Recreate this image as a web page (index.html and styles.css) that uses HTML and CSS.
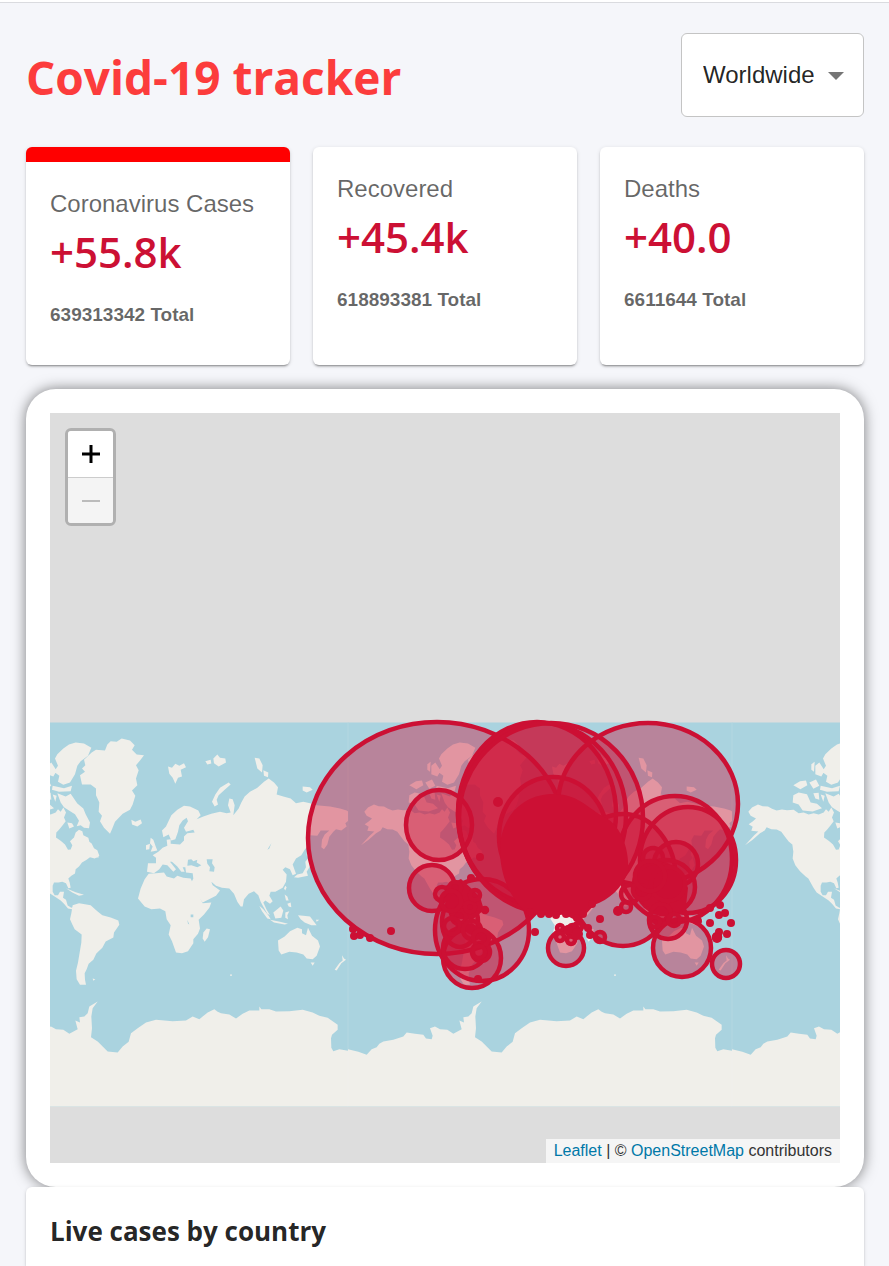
FILE: index.html
```html
<!DOCTYPE html>
<html lang="en">
<head>
<meta charset="utf-8">
<meta name="viewport" content="width=device-width, initial-scale=1">
<title>Covid-19 tracker</title>
<link rel="stylesheet" href="styles.css">
</head>
<body>
<div class="app">
  <header class="header">
    <h1 class="title">Covid-19 tracker</h1>
    <div class="picker">
      <select class="picker-select" aria-label="Country">
        <option>Worldwide</option>
      </select>
      <svg class="picker-arrow" viewBox="0 0 16 8" aria-hidden="true"><path d="M0 0h16l-8 8z"/></svg>
    </div>
  </header>

  <section class="stats">
    <article class="card stat stat-active">
      <p class="stat-label">Coronavirus Cases</p>
      <h2 class="stat-value">+55.8k</h2>
      <p class="stat-total">639313342 Total</p>
    </article>
    <article class="card stat">
      <p class="stat-label">Recovered</p>
      <h2 class="stat-value">+45.4k</h2>
      <p class="stat-total">618893381 Total</p>
    </article>
    <article class="card stat">
      <p class="stat-label">Deaths</p>
      <h2 class="stat-value">+40.0</h2>
      <p class="stat-total">6611644 Total</p>
    </article>
  </section>

  <section class="map-card">
    <div class="map">
      <svg class="map-canvas" viewBox="50 413 790 750" preserveAspectRatio="xMidYMid slice" role="img" aria-label="World map of cases">
        <defs>
          <g id="world">
            <rect class="water" width="1153" height="1152"/>
            <g class="land">
              <!-- North America -->
              <path d="M49 268L60 255 78 246 92 251 108 252 120 259 134 264 150 261 165 263 185 262 200 272 215 270 230 276 245 272 260 276 275 270 282 260 290 268 298 255 306 270 300 285 305 296 296 308 285 322 277 330 276 345 290 355 303 366 312 382 320 381 325 368 318 356 330 345 335 330 345 322 355 326 358 338 373 346 376 358 383 363 390 377 400 383 406 400 392 408 378 404 368 412 354 420 345 432 335 440 333 453 322 460 313 468 317 480 320 496 313 497 306 482 295 478 283 480 270 480 266 490 266 508 272 518 282 518 288 508 300 508 297 526 306 532 311 549 322 556 335 552 328 561 312 558 300 544 290 534 272 522 254 510 244 495 229 468 221 462 204 446 190 428 182 408 184 388 181 366 170 357 159 343 148 328 134 321 118 320 104 314 98 324 84 332 62 352 39 368 66 339 79 327 58 325 62 313 50 305 62 297 72 288 56 280Z"/>
              <!-- Canadian Arctic -->
              <path d="M273 108L280 95 298 78 315 66 335 60 360 63 382 76 372 100 350 116 340 130 333 155 318 180 298 187 282 178 286 160 270 148 282 130ZM280 212L305 222 320 214 340 243 358 258 365 275 378 300 375 317 360 316 350 308 338 311 345 295 333 275 315 264 300 254 290 240ZM184 218L200 210 225 215 236 240 255 244 270 257 242 267 212 264 200 246 182 240ZM184 188L204 176 222 174 226 188 205 200ZM232 180L252 171 262 190 244 199ZM266 190L300 197 324 190 320 206 285 208 264 202ZM278 145L268 162 250 155 250 130 262 120ZM244 212L260 211 262 232 250 228ZM266 216L278 220 274 238ZM310 300L324 302 330 312 316 318ZM238 125L248 118 246 148 238 142ZM390 394L403 398 404 405 392 405ZM306 497L335 509 360 517 345 520 325 510Z"/>
              <!-- South America -->
              <path d="M326 548L345 542 363 545 380 548 400 566 415 578 440 585 463 594 466 607 450 630 448 645 425 657 415 676 397 693 388 712 374 724 368 740 362 752 363 772 366 787 348 787 338 770 336 745 342 720 347 690 352 660 353 636 332 620 325 606 318 590 322 572Z"/>
            </g>
            <g class="land" transform="translate(258 -22)">
              <!-- Greenland, Iceland, Svalbard and Arctic islands -->
              <path d="M90 180L105 170 96 160 106 150 102 134 125 112 138 104 165 106 172 88 182 78 200 80 215 70 240 76 254 90 246 104 260 118 282 120 270 136 258 150 266 165 258 190 262 210 246 226 256 242 248 268 240 284 218 296 195 320 186 342 180 356 162 338 150 318 156 302 146 290 148 262 138 240 138 220 122 208 96 208ZM244 314L256 320 272 313 276 324 262 334 246 328ZM354 154L366 158 376 146 388 152 402 144 408 156 392 164 396 184 384 188 376 206 368 188 358 176ZM466 138L482 134 484 145 472 148ZM490 130L502 118 510 128 526 130 528 142 506 154 492 144ZM614 128L628 130 638 150 636 172 622 160ZM640 165L655 172 654 186 642 182ZM758 214L780 216 788 224 770 232 758 226ZM536 202L542 208 524 224 506 240 500 254 504 268 494 274 486 260 496 238 510 218Z"/>
              <!-- Eurasia -->
              <path d="M291 470L294 444 318 444 318 428 308 420 325 410 338 398 352 392 350 374 362 372 362 386 390 388 402 376 402 364 412 354 434 352 430 344 408 350 402 338 414 318 410 308 398 316 388 330 384 350 376 372 364 376 356 358 340 366 336 346 348 334 364 300 382 284 402 272 420 274 445 286 452 300 440 312 460 304 484 296 510 290 530 294 542 292 534 270 538 250 548 252 554 270 550 300 566 280 574 262 584 244 600 230 622 218 642 200 656 190 672 202 684 216 680 238 700 244 722 250 738 264 760 260 780 264 800 270 815 272 840 274 870 280 890 286 910 300 922 308 918 318 898 314 886 324 890 334 874 346 858 342 850 350 838 365 832 388 822 402 814 396 816 374 824 358 838 346 812 346 802 362 780 360 772 375 774 392 764 404 754 420 738 430 728 448 738 476 728 480 720 462 706 456 698 464 710 478 708 500 698 518 676 530 662 530 658 542 668 558 660 566 646 556 640 562 650 584 660 600 652 596 640 575 632 560 625 540 612 528 596 536 582 552 578 574 572 574 562 560 552 536 538 520 516 518 498 512 484 500 488 510 510 526 498 542 458 562 444 544 424 502 430 490 428 474 408 472 406 456 398 456 404 470 394 470 382 454 366 440 360 440 378 462 370 470 352 450 338 448 328 462 312 474Z"/>
              <!-- British Isles, Japan -->
              <path d="M302 368L310 374 318 396 322 406 302 410 308 394 300 384ZM288 390L300 386 298 402 288 404ZM776 428L782 450 770 470 774 482 744 488 732 486 742 478 758 474 768 456 766 440ZM772 396L778 398 778 430 770 420ZM706 512L710 516 706 526 702 520Z"/>
              <!-- Africa and Madagascar -->
              <path d="M296 476L318 474 342 472 350 484 372 490 382 482 400 488 422 490 432 512 446 540 458 564 484 562 478 578 462 598 446 614 450 640 444 656 430 672 430 684 414 708 396 714 378 712 366 678 356 658 362 630 350 612 346 588 330 580 304 582 284 574 264 550 272 520 284 492ZM470 640L480 642 474 666 464 680 458 670 460 652Z"/>
              <!-- Indonesia, Philippines, New Guinea -->
              <path d="M628 572L640 582 656 602 662 612 652 610 636 588ZM660 614L690 620 714 626 704 628 672 622ZM670 592L692 574 700 586 694 608 676 610ZM706 592L718 588 712 600 714 612 706 608ZM704 538L712 544 716 556 708 556ZM712 566L722 562 724 576 716 574ZM744 600L760 602 780 604 800 630 784 630 764 622 752 612Z"/>
              <!-- Australia and New Zealand -->
              <path d="M684 676L704 664 720 648 742 638 756 642 756 654 768 660 774 638 786 662 804 676 810 694 800 722 788 732 770 730 760 718 740 712 718 710 694 718 686 706ZM782 742L794 742 788 752ZM876 720L882 730 888 734 874 744 860 766 854 764 868 744 878 736Z"/>
              <path d="M798 614h10l-8 6zM540 778h6v4h-6zM128 790l8 2-6 5z"/>
            </g>
            <!-- Inland seas -->
            <g class="water" transform="translate(258 -22)">
              <path d="M414 434L424 432 430 438 442 434 440 442 454 450 442 456 424 450 412 452ZM470 432L488 432 486 444 494 456 492 470 478 468 480 456 472 446ZM422 598h8v8h-8zM412 614l6 14-4-2zM664 384l-6 16-6 4z"/>
            </g>
            <!-- Antarctica -->
            <path class="land" transform="translate(-24 772)" d="M24 208L55 216 80 225 95 208 110 202 118 192 130 185 160 180 190 170 200 158 225 162 250 165 258 176 275 178 278 168 270 145 285 140 300 148 322 150 340 162 365 148 358 122 372 128 370 112 385 110 395 100 400 80 425 65 410 85 406 110 408 145 405 172 425 185 440 200 455 215 485 218 500 200 518 186 525 160 545 145 570 128 600 120 650 124 690 122 710 110 730 118 755 98 775 88 785 96 795 100 820 104 840 116 860 102 880 92 910 92 910 80 916 88 940 88 960 95 1000 94 1040 90 1070 98 1090 108 1115 114 1145 135 1145 150 1128 165 1125 175 1126 204 1132 214 1150 208 1176 213V380H24Z"/>
          </g>
        </defs>

        <use href="#world" transform="translate(-36 722.5) scale(.33333)"/>
        <use href="#world" transform="translate(348 722.5) scale(.33333)"/>
        <use href="#world" transform="translate(732 722.5) scale(.33333)"/>
        <path class="seam" d="M348 723v384M732 723v384"/>

        <g class="bubbles">
          <ellipse cx="437" cy="838" rx="129" ry="116"/>
          <ellipse cx="439" cy="825" rx="33" ry="35"/>
          <circle cx="432" cy="888" r="23"/>
          <ellipse cx="482" cy="930" rx="47" ry="51"/>
          <ellipse cx="472" cy="958" rx="29" ry="30"/>
          <ellipse cx="465" cy="948" rx="22" ry="21"/>
          <ellipse cx="460" cy="922" rx="18" ry="25"/>
          <circle cx="481" cy="952" r="9"/>
          <ellipse cx="537" cy="813" rx="79" ry="91"/>
          <ellipse cx="542" cy="815" rx="84" ry="92"/>
          <ellipse cx="551" cy="818" rx="92" ry="95"/>
          <ellipse cx="553" cy="836" rx="54" ry="59"/>
          <ellipse cx="648" cy="804" rx="90" ry="81"/>
          <ellipse cx="675" cy="859" rx="57" ry="63"/>
          <ellipse cx="688" cy="860" rx="48" ry="53"/>
          <ellipse cx="623" cy="880" rx="53" ry="66"/>
          <circle cx="653" cy="858" r="10"/>
          <circle cx="676" cy="864" r="22"/>
          <ellipse cx="666" cy="887" rx="29" ry="27"/>
          <circle cx="655" cy="884" r="21"/>
          <circle cx="668" cy="920" r="19"/>
          <circle cx="682" cy="948" r="29"/>
          <circle cx="726" cy="964" r="14"/>
          <circle cx="566" cy="948" r="18"/>
        </g>
        <!-- Overlapping markers of Europe and South-East Asia -->
        <g class="cluster">
          <path d="M500 850C500 815 525 793 555 794C578 795 586 806 602 816C618 822 630 845 628 872C622 888 609 900 594 905L586 914 575 920 560 912 545 914 526 912C510 898 500 875 500 850Z"/>
          <path d="M638 876L650 866 666 862 682 872 688 888 686 906 676 914 660 916 650 908 641 898 632 888Z"/>
          <path d="M445 886L461 879 472 889 480 897 484 910 472 920 450 918 446 904ZM455 926L472 923 488 934 489 945 480 940 466 932Z"/>
        </g>
        <g class="bubbles">
          <circle cx="442" cy="894" r="7"/><circle cx="459" cy="917" r="7"/><circle cx="470" cy="907" r="5"/><circle cx="455" cy="888" r="6"/>
          <circle cx="475" cy="895" r="5"/><circle cx="485" cy="910" r="2"/><circle cx="452" cy="926" r="8"/><circle cx="472" cy="930" r="9"/>
          <circle cx="481" cy="938" r="8"/><circle cx="479" cy="952" r="6"/><circle cx="451" cy="901" r="10"/><circle cx="630" cy="894" r="9"/>
          <circle cx="626" cy="907" r="5"/><circle cx="642" cy="890" r="9"/><circle cx="600" cy="937" r="5"/><circle cx="560" cy="928" r="3"/>
          <circle cx="573" cy="931" r="6"/><circle cx="571" cy="940" r="4"/><circle cx="578" cy="927" r="4"/><circle cx="560" cy="937" r="4"/>
          <circle cx="661" cy="914" r="10"/><circle cx="655" cy="922" r="5"/><circle cx="674" cy="920" r="6"/><circle cx="717" cy="937" r="3"/>
          <circle cx="668" cy="884" r="17"/><circle cx="650" cy="876" r="15"/>
        </g>
        <g class="dots">
          <circle cx="498" cy="802" r="5"/><circle cx="480" cy="857" r="4"/><circle cx="391" cy="931" r="4"/>
          <circle cx="353" cy="929" r="4"/><circle cx="354" cy="936" r="4"/><circle cx="360" cy="935" r="4"/><circle cx="370" cy="938" r="4"/>
          <circle cx="471" cy="878" r="4"/><circle cx="478" cy="979" r="4"/><circle cx="535" cy="932" r="4"/><circle cx="530" cy="912" r="4"/>
          <circle cx="541" cy="914" r="4"/><circle cx="549" cy="914" r="4"/><circle cx="556" cy="915" r="4"/><circle cx="566" cy="914" r="4"/>
          <circle cx="577" cy="918" r="4"/><circle cx="583" cy="914" r="4"/><circle cx="592" cy="904" r="4"/><circle cx="588" cy="928" r="4"/>
          <circle cx="590" cy="935" r="4"/><circle cx="577" cy="934" r="6"/><circle cx="600" cy="919" r="4"/><circle cx="568" cy="930" r="5"/>
          <circle cx="710" cy="908" r="4"/><circle cx="720" cy="905" r="4"/><circle cx="719" cy="915" r="4"/><circle cx="725" cy="913" r="4"/>
          <circle cx="731" cy="923" r="4"/><circle cx="710" cy="923" r="4"/><circle cx="698" cy="921" r="4"/><circle cx="727" cy="934" r="4"/>
          <circle cx="719" cy="932" r="4"/><circle cx="717" cy="938" r="5"/><circle cx="618" cy="911" r="5"/>
        </g>
      </svg>

      <div class="zoom">
        <button class="zoom-button" type="button" aria-label="Zoom in"><svg viewBox="0 0 20 20" aria-hidden="true"><path d="M10 1v18M1 10h18"/></svg></button>
        <button class="zoom-button" type="button" aria-label="Zoom out" disabled><svg viewBox="0 0 20 20" aria-hidden="true"><path d="M1 10h18"/></svg></button>
      </div>
      <p class="attribution"><a href="https://leafletjs.com">Leaflet</a> | © <a href="https://www.openstreetmap.org/copyright">OpenStreetMap</a> contributors</p>
    </div>
  </section>

  <section class="card live">
    <h3 class="live-title">Live cases by country</h3>
  </section>
</div>
</body>
</html>
```

FILE: styles.css
```css
* {
  box-sizing: border-box;
  margin: 0;
}

body {
  background: #f5f6fa;
  color: rgba(0, 0, 0, 0.87);
  font-family: "Liberation Sans", Arial, sans-serif;
  border-top: 2px solid #fff;
}

.app {
  display: flex;
  flex-direction: column;
  min-height: calc(100vh - 2px);
  padding: 30px 25px 0 26px;
  border-top: 1px solid #dadbdf;
}

.header {
  display: flex;
  align-items: center;
  justify-content: space-between;
  margin-bottom: 30px;
}

.title {
  padding-top: 4px;
  color: #fc3c3c;
  font: 700 46px/64px "Open Sans", "Noto Sans", sans-serif;
}

.picker {
  position: relative;
  display: flex;
}

.picker-select {
  appearance: none;
  height: 84px;
  padding: 0 48px 2px 21px;
  border: 1px solid #c4c4c4;
  border-radius: 6px;
  background: #fff;
  color: rgba(0, 0, 0, 0.87);
  font: 24px "Liberation Sans", Arial, sans-serif;
}

.picker-arrow {
  position: absolute;
  right: 20px;
  top: 39px;
  width: 16px;
  height: 8px;
  fill: #757575;
  pointer-events: none;
}

.card {
  background: #fff;
  border-radius: 6px;
  box-shadow: 0 3px 1px -2px rgba(0, 0, 0, 0.2), 0 2px 2px rgba(0, 0, 0, 0.14), 0 1px 4px rgba(0, 0, 0, 0.12);
}

.stats {
  display: grid;
  grid-template-columns: repeat(3, 1fr);
  gap: 23px;
  margin-bottom: 24px;
}

.stat {
  padding: 24px 24px 36px;
}

.stat-active {
  border-top: 15px solid #f00;
}

.stat-label {
  color: rgba(0, 0, 0, 0.6);
  font-size: 24px;
  line-height: 36px;
  white-space: nowrap;
}

.stat-value {
  color: #cc1034;
  font: 600 42px/60px "Open Sans", "Noto Sans", sans-serif;
}

.stat-total {
  margin-top: 19px;
  color: rgba(0, 0, 0, 0.6);
  font-size: 19px;
  font-weight: 700;
  line-height: 28px;
}

.map-card {
  padding: 24px;
  border-radius: 30px;
  background: #fff;
  box-shadow: 0 0 14px rgba(0, 0, 0, 0.5);
}

.map {
  position: relative;
  height: 750px;
  overflow: hidden;
  background: #ddd;
}

.map-canvas {
  display: block;
  width: 100%;
  height: 100%;
}

.water {
  fill: #aad3df;
}

.land {
  fill: #f0efea;
}

.seam {
  stroke: #fff;
  stroke-opacity: 0.12;
}

.bubbles {
  fill: #cc1034;
  fill-opacity: 0.4;
  stroke: #cc1034;
  stroke-width: 4.5;
}

.cluster,
.dots {
  fill: #cc1034;
}

.zoom {
  position: absolute;
  top: 15px;
  left: 15px;
  display: flex;
  flex-direction: column;
  overflow: hidden;
  border: 3px solid #b0b0b0;
  border-radius: 6px;
}

.zoom-button {
  display: grid;
  place-items: center;
  width: 45px;
  height: 46px;
  padding: 0;
  border: 0;
  background: #fff;
}

.zoom-button + .zoom-button {
  border-top: 1px solid #ccc;
}

.zoom-button:disabled {
  background: #f4f4f4;
}

.zoom-button svg {
  width: 20px;
  height: 20px;
  stroke: #000;
  stroke-width: 3;
}

.zoom-button:disabled svg {
  stroke: #bbb;
  stroke-width: 2;
}

.attribution {
  position: absolute;
  right: 0;
  bottom: 0;
  padding: 0 8px;
  background: rgba(255, 255, 255, 0.7);
  color: #333;
  font-size: 16px;
  line-height: 24px;
}

.attribution a {
  color: #0078a8;
  text-decoration: none;
}

.live {
  position: relative;
  flex: 1;
  padding: 24px 24px 12px;
  border-radius: 6px 6px 0 0;
}

.live-title {
  font: 700 26px/40px "Open Sans", "Noto Sans", sans-serif;
}
```
